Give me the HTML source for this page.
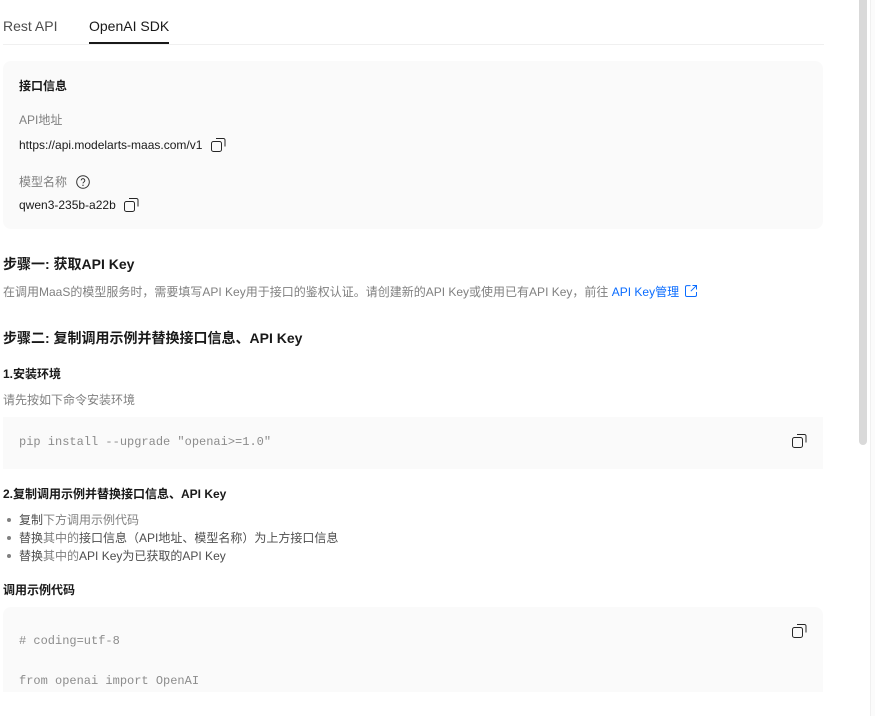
<!DOCTYPE html>
<html lang="zh">
<head>
<meta charset="utf-8">
<style>
html,body{margin:0;padding:0;background:#fff;width:875px;height:716px;overflow:hidden}
body{position:relative;font-family:"Liberation Sans","Noto Sans CJK SC",sans-serif;font-size:12px;color:#191919}
.t{position:absolute;white-space:pre;line-height:18px}
.g{color:#808080}
.b{font-weight:700;color:#191919}
.d{color:#4d4d4d}
.m{font-family:"Liberation Mono",monospace;color:#8c8c8c;font-size:12px}
.box{position:absolute;background:#fafafa}
svg{position:absolute;fill:none}
.dot{position:absolute;width:4px;height:4px;border-radius:50%;background:#808080;left:7px}
</style>
</head>
<body>
<div class="t" style="left:3px;top:17px;font-size:14px;color:#4d4d4d">Rest API</div>
<div class="t" style="left:89px;top:17px;font-size:14px;color:#191919">OpenAI SDK</div>
<div style="position:absolute;left:3px;top:44px;width:821px;height:1px;background:#f0f0f0"></div>
<div style="position:absolute;left:89px;top:42px;width:80px;height:2px;background:#191919"></div>

<div class="box" style="left:3px;top:61px;width:820px;height:168px;border-radius:8px"></div>
<div class="t b" style="left:19px;top:77px">接口信息</div>
<div class="t g" style="left:19px;top:111px">API地址</div>
<div class="t" style="left:19px;top:136px;color:#191919">https://api.modelarts-maas.com/v1</div>
<svg style="left:211px;top:138px" width="15" height="14" viewBox="0 0 15 14"><rect x="0.5" y="3.5" width="10" height="10" rx="2" stroke="#262626"/><path d="M5 .5h7.5a1.5 1.5 0 0 1 1.5 1.5v6.5" stroke="#262626"/></svg>
<div class="t g" style="left:19px;top:173px">模型名称</div>
<svg style="left:76px;top:175px" width="14" height="14" viewBox="0 0 14 14"><circle cx="7" cy="7" r="6.3" stroke="#333"/><path d="M5.2 5.4a1.8 1.8 0 1 1 2.7 1.6c-.6.4-.9.7-.9 1.4" stroke="#333"/><circle cx="7" cy="10.3" r=".7" fill="#333"/></svg>
<div class="t" style="left:19px;top:196px;color:#191919">qwen3-235b-a22b</div>
<svg style="left:124px;top:198px" width="15" height="14" viewBox="0 0 15 14"><rect x="0.5" y="3.5" width="10" height="10" rx="2" stroke="#262626"/><path d="M5 .5h7.5a1.5 1.5 0 0 1 1.5 1.5v6.5" stroke="#262626"/></svg>

<div class="t b" style="left:3px;top:255px;font-size:14px">步骤一: 获取API Key</div>
<div class="t g" style="left:3px;top:283px">在调用MaaS的模型服务时，需要填写API Key用于接口的鉴权认证。请创建新的API Key或使用已有API Key，前往 <span style="color:#0a6cff">API Key管理</span></div>
<svg style="left:685px;top:285px" width="12" height="12" viewBox="0 0 12 12"><path d="M5.5.6H2A1.5 1.5 0 0 0 .5 2.100v8A1.500 1.500 0 0 0 2 11.500h8a1.500 1.500 0 0 0 1.500-1.500V7M7.500.5h4v4M11.300.7 5.800 6.200" stroke="#0a6cff"/></svg>

<div class="t b" style="left:3px;top:329px;font-size:14px">步骤二: 复制调用示例并替换接口信息、API Key</div>
<div class="t b" style="left:3px;top:365px">1.安装环境</div>
<div class="t g" style="left:3px;top:391px">请先按如下命令安装环境</div>

<div class="box" style="left:3px;top:417px;width:820px;height:52px"></div>
<div class="t m" style="left:19px;top:433px">pip install --upgrade "openai&gt;=1.0"</div>
<svg style="left:792px;top:434px" width="15" height="14" viewBox="0 0 15 14"><rect x="0.5" y="3.500" width="10" height="10" rx="2" stroke="#262626"/><path d="M5 .5h7.500a1.500 1.500 0 0 1 1.500 1.500v6.500" stroke="#262626"/></svg>

<div class="t b" style="left:3px;top:485px">2.复制调用示例并替换接口信息、API Key</div>
<div class="dot" style="top:518px"></div>
<div class="t" style="left:19px;top:511px"><span class="d">复制</span><span class="g">下方调用示例代码</span></div>
<div class="dot" style="top:536px"></div>
<div class="t" style="left:19px;top:529px"><span class="d">替换</span><span class="g">其中的</span><span class="d">接口信息（API地址、模型名称）为上方接口信息</span></div>
<div class="dot" style="top:554px"></div>
<div class="t" style="left:19px;top:547px"><span class="d">替换</span><span class="g">其中的</span><span class="d">API Key为已获取的API Key</span></div>
<div class="t b" style="left:3px;top:581px">调用示例代码</div>

<div class="box" style="left:3px;top:607px;width:820px;height:85px;border-radius:8px 8px 0 0"></div>
<div class="t m" style="left:19px;top:632px"># coding=utf-8</div>
<div class="t m" style="left:19px;top:672px;height:20px;overflow:hidden">from openai import OpenAI</div>
<svg style="left:792px;top:624px" width="15" height="14" viewBox="0 0 15 14"><rect x="0.5" y="3.500" width="10" height="10" rx="2" stroke="#262626"/><path d="M5 .5h7.500a1.500 1.500 0 0 1 1.500 1.500v6.500" stroke="#262626"/></svg>

<div style="position:absolute;left:859px;top:0;width:8px;height:445px;background:#d9d9d9;border-radius:0 0 4px 4px"></div>
<div style="position:absolute;left:870px;top:0;width:1px;height:716px;background:#f0f0f0"></div>
<div style="position:absolute;left:871px;top:0;width:4px;height:716px;background:#fbfbfb"></div>
</body>
</html>
